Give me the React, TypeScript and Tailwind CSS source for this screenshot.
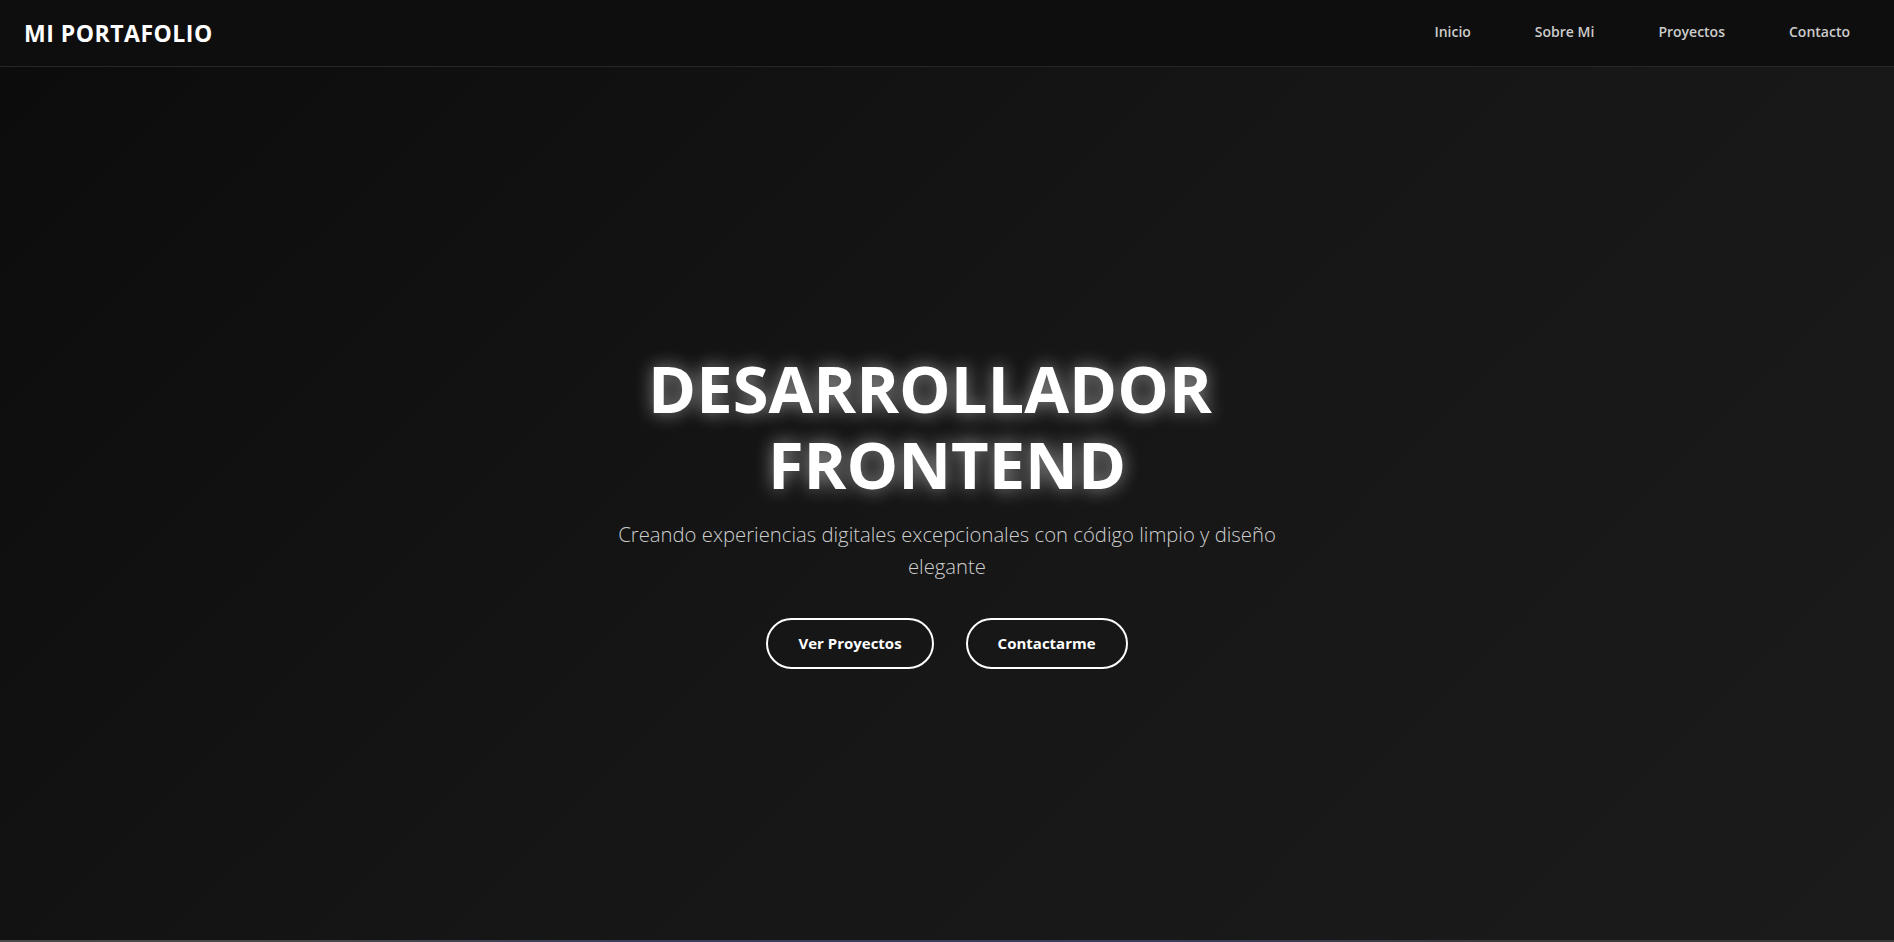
export default function App() {
  const links = ["Inicio", "Sobre Mi", "Proyectos", "Contacto"];

  return (
    <div className="flex h-screen flex-col bg-[#111111] font-['Segoe_UI','Open_Sans',sans-serif] text-white">
      <header className="flex h-[67px] shrink-0 items-center justify-between border-b border-[#262626] bg-[#0e0e0e] px-6">
        <div className="text-[23px] font-bold tracking-[0.5px] text-white">MI PORTAFOLIO</div>
        <nav className="-mt-1 flex items-center gap-8 pr-1">
          {links.map((l) => (
            <a key={l} href="#" className="px-4 py-2 text-[14px] font-semibold text-[#cccccc]">
              {l}
            </a>
          ))}
        </nav>
      </header>

      <main className="flex flex-1 items-center justify-center bg-[linear-gradient(135deg,#0c0c0c_0%,#161616_50%,#1b1b1b_100%)] px-4 pt-[12px]">
        <div className="flex flex-col items-center text-center">
          <h1 className="mb-4 text-[65px] leading-[1.17] font-bold text-white [text-shadow:0_0_18px_rgba(255,255,255,0.55)]">
            <span className="pr-[34px]">DESARROLLADOR</span>
            <br />
            FRONTEND
          </h1>
          <p className="mb-9 max-w-[700px] text-[20.3px] leading-[32px] font-light text-[#cfcfcf]">
            Creando experiencias digitales excepcionales con código limpio y diseño elegante
          </p>
          <div className="flex gap-8">
            <a href="#" className="rounded-full border-2 border-white px-[30px] py-3 text-[15px] font-bold text-white">
              Ver Proyectos
            </a>
            <a href="#" className="rounded-full border-2 border-white px-[30px] py-3 text-[15px] font-bold text-white">
              Contactarme
            </a>
          </div>
        </div>
      </main>
      <div className="h-[2px] shrink-0 bg-[linear-gradient(90deg,#4a4a4a_0%,#4a4a4a_15%,#3a3f5e_35%,#3a3f5e_60%,#3c3c3c_80%,#3c3c3c_100%)]" />
    </div>
  );
}
